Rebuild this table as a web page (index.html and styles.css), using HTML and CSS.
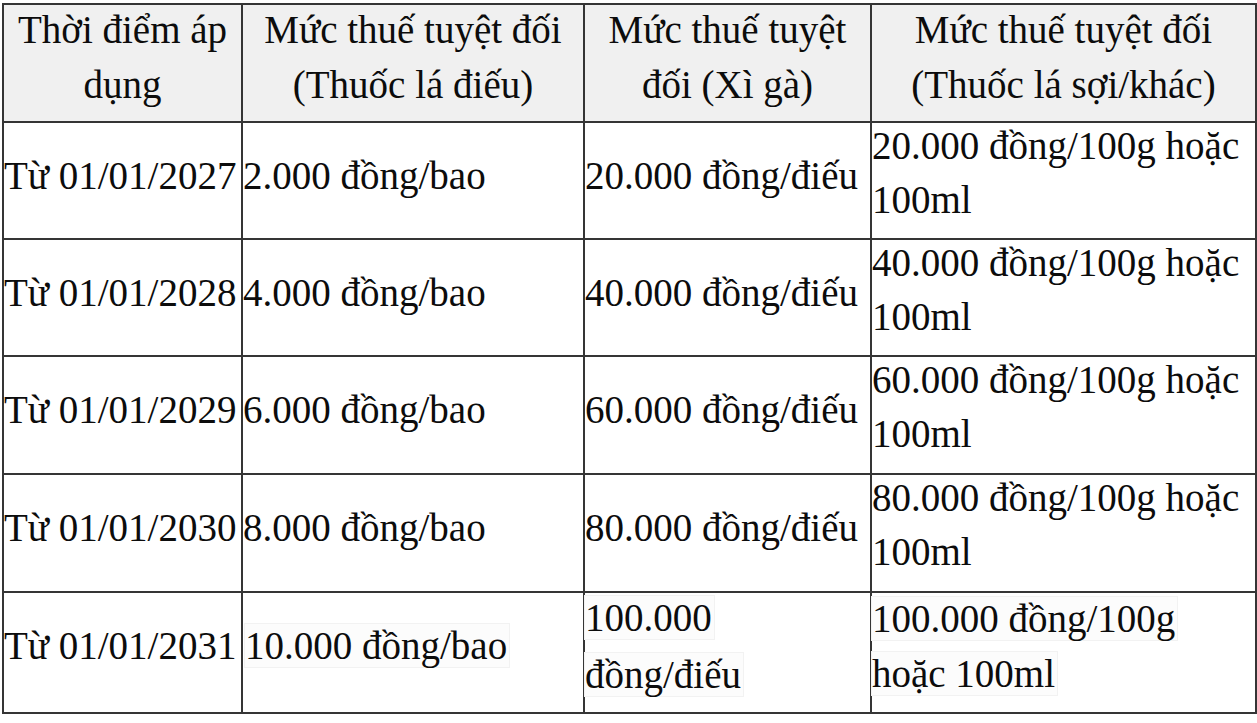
FILE: index.html
```html
<!DOCTYPE html>
<html lang="vi">
<head>
<meta charset="utf-8">
<title>Mức thuế tuyệt đối</title>
<link rel="stylesheet" href="styles.css">
</head>
<body>
<table class="tax">
  <colgroup>
    <col class="w1"><col class="w2"><col class="w3"><col class="w4">
  </colgroup>
  <thead>
    <tr class="r-head">
      <th><div class="hd">Thời điểm áp<br>dụng</div></th>
      <th><div class="hd">Mức thuế tuyệt đối<br>(Thuốc lá điếu)</div></th>
      <th><div class="hd">Mức thuế tuyệt<br>đối (Xì gà)</div></th>
      <th><div class="hd">Mức thuế tuyệt đối<br>(Thuốc lá sợi/khác)</div></th>
    </tr>
  </thead>
  <tbody>
    <tr class="r-117">
      <td class="c1"><div class="one">Từ 01/01/2027</div></td>
      <td class="c2"><div class="one">2.000 đồng/bao</div></td>
      <td class="c3"><div class="one">20.000 đồng/điếu</div></td>
      <td class="c4"><div class="two">20.000 đồng/100g hoặc<br>100ml</div></td>
    </tr>
    <tr class="r-117">
      <td class="c1"><div class="one">Từ 01/01/2028</div></td>
      <td class="c2"><div class="one">4.000 đồng/bao</div></td>
      <td class="c3"><div class="one">40.000 đồng/điếu</div></td>
      <td class="c4"><div class="two">40.000 đồng/100g hoặc<br>100ml</div></td>
    </tr>
    <tr class="r-118">
      <td class="c1"><div class="one">Từ 01/01/2029</div></td>
      <td class="c2"><div class="one">6.000 đồng/bao</div></td>
      <td class="c3"><div class="one">60.000 đồng/điếu</div></td>
      <td class="c4"><div class="two">60.000 đồng/100g hoặc<br>100ml</div></td>
    </tr>
    <tr class="r-118">
      <td class="c1"><div class="one">Từ 01/01/2030</div></td>
      <td class="c2"><div class="one">8.000 đồng/bao</div></td>
      <td class="c3"><div class="one">80.000 đồng/điếu</div></td>
      <td class="c4"><div class="two">80.000 đồng/100g hoặc<br>100ml</div></td>
    </tr>
    <tr class="r-last">
      <td class="c1"><div class="one last">Từ 01/01/2031</div></td>
      <td class="c2"><div class="one last"><span class="hl hl-ind">10.000 đồng/bao</span></div></td>
      <td class="c3"><div class="two last wide"><span class="hl">100.000</span><br><span class="hl">đồng/điếu</span></div></td>
      <td class="c4"><div class="two last mid"><span class="hl">100.000 đồng/100g</span><br><span class="hl">hoặc 100ml</span></div></td>
    </tr>
  </tbody>
</table>
</body>
</html>
```

FILE: styles.css
```css
html, body {
  margin: 0;
  background: #ffffff;
}

body {
  padding: 3px 0 0 2px;
  font-family: "Liberation Serif", "Times New Roman", serif;
  font-size: 39px;
  color: #0c0c0c;
}

.tax {
  border-collapse: collapse;
  table-layout: fixed;
  width: 1253px;
}

.w1 { width: 239px; }
.w2 { width: 342px; }
.w3 { width: 287px; }
.w4 { width: 385px; }

.tax th,
.tax td {
  border: 2px solid #353535;
  padding: 0;
  vertical-align: middle;
  text-align: left;
}

.tax th {
  background: #f0f0f0;
  font-weight: normal;
  text-align: center;
}

.r-head { height: 118px; }
.r-117 { height: 117px; }
.r-118 { height: 118px; }
.r-last { height: 121px; }

.hd {
  line-height: 55px;
  margin: -6px 0 6px;
}

.one {
  line-height: 54px;
  margin: -5px 0 5px;
}

.two {
  line-height: 54px;
  margin: -8px 0 8px;
}

.one.last {
  margin: -7px 0 7px;
}

.two.last {
  margin: -7px 0 7px;
}

.two.wide { line-height: 57px; }
.two.mid { line-height: 55px; }

.c1 { padding-left: 3px; }
.c2 { padding-left: 0; }
.c3 { padding-left: 1px; }
.c4 { padding-left: 1px; }

.hl {
  background: #fcfcfc;
  box-shadow: 0 0 0 1px #f2f2f2;
  padding-right: 2px;
}

.hl-ind {
  margin-left: 2px;
}
```
